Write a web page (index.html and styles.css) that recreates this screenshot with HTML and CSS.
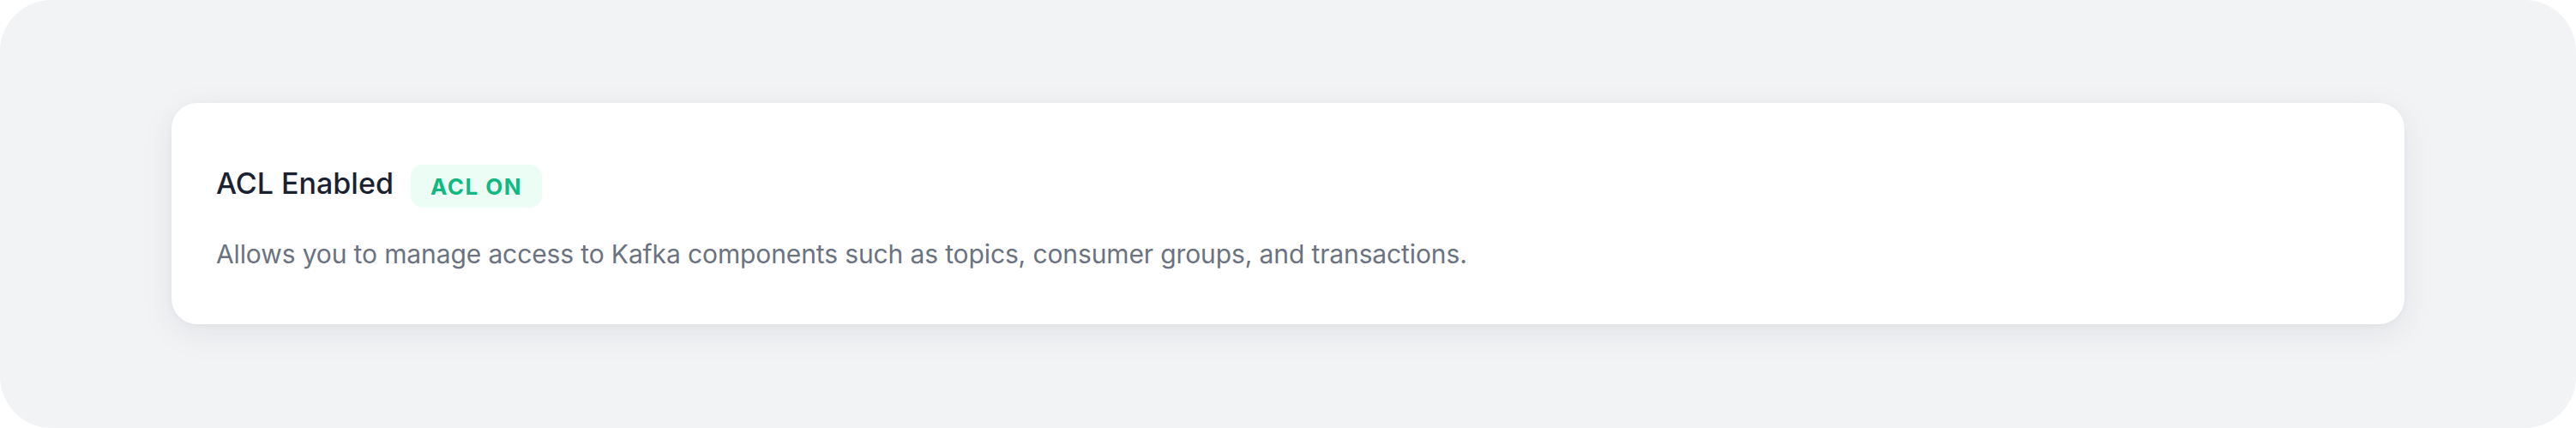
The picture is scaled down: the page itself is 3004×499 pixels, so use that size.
FILE: index.html
```html
<!DOCTYPE html>
<html lang="en">
<head>
<meta charset="utf-8">
<title>ACL Enabled</title>
<link rel="stylesheet" href="styles.css">
</head>
<body>
<div class="frame">
  <section class="card">
    <div class="card-head">
      <h2 class="card-title">ACL Enabled</h2>
      <span class="badge">ACL ON</span>
    </div>
    <p class="card-desc">Allows you to manage access to Kafka components such as topics, consumer groups, and transactions.</p>
  </section>
</div>
</body>
</html>
```

FILE: styles.css
```css
* { box-sizing: border-box; }
html, body {
  margin: 0;
  padding: 0;
  background: #ffffff;
}
body {
  font-family: Inter, "Noto Sans", "Liberation Sans", sans-serif;
  width: 3004px;
  height: 499px;
}
.frame {
  width: 3004px;
  height: 499px;
  background: #f2f3f5;
  border-radius: 60px;
  padding: 120px 200px 121px;
  display: flex;
  flex-direction: column;
}
.card {
  background: #ffffff;
  border-radius: 30px;
  height: 258px;
  padding: 72px 52px 0;
  box-shadow: 0 10px 40px rgba(17, 24, 39, 0.07), 0 2px 8px rgba(17, 24, 39, 0.03);
  display: flex;
  flex-direction: column;
}
.card-head {
  display: flex;
  align-items: flex-start;
  gap: 20px;
  height: 50px;
}
.card-title {
  margin: 0;
  font-size: 34px;
  font-weight: 500;
  color: #1a2232;
  line-height: 44px;
}
.badge {
  display: inline-flex;
  align-items: center;
  height: 50px;
  padding: 0 23px;
  border-radius: 14px;
  background: #ecfdf5;
  color: #10b981;
  font-size: 26px;
  font-weight: 700;
  letter-spacing: 1.5px;
}
.card-desc {
  margin: 34px 0 0;
  font-size: 30px;
  line-height: 40px;
  letter-spacing: -0.12px;
  color: #6b7280;
}
```
